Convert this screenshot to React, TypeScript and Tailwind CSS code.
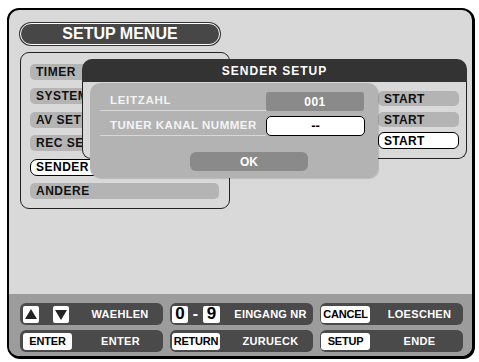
import React from "react";

const font = { fontFamily: '"Liberation Sans", Arial, sans-serif' };

const menuItems = ["TIMER", "SYSTEM", "AV SETUP", "REC SETUP", "SENDER", "ANDERE"];

function Key({ children, w = "w-[49px]" }: { children: React.ReactNode; w?: string }) {
  return (
    <div
      className={`${w} h-[17px] bg-white rounded-[3px] flex items-center justify-center text-black text-[11px] font-bold tracking-[-0.2px]`}
    >
      {children}
    </div>
  );
}

function Tri({ down }: { down?: boolean }) {
  return (
    <div className="w-[16px] h-[17px] bg-white rounded-[2px] flex items-center justify-center">
      <svg width="12" height="11" viewBox="0 0 12 11">
        {down ? <polygon points="0,1 12,1 6,11" fill="#222" /> : <polygon points="6,0 12,10 0,10" fill="#222" />}
      </svg>
    </div>
  );
}

export default function App() {
  return (
    <div className="w-[479px] h-[362px] bg-white overflow-hidden" style={font}>
      <div className="ml-[7px] mt-[8px] w-[467px] h-[350px] rounded-[12px] border-2 border-black shadow-[1px_1px_0_#000] bg-[#d9d9d9] flex flex-col overflow-hidden">
        {/* top area */}
        <div className="relative h-[284px] shrink-0">
          <div className="ml-[11px] mt-[13px] w-[200px] h-[22px] rounded-full bg-[#474747] border-[1.5px] border-white ring-1 ring-[#333] flex items-center justify-center">
            <span className="text-white text-[16px] font-bold">SETUP MENUE</span>
          </div>

          <div className="ml-[11px] mt-[7px] w-[210px] h-[157px] rounded-[9px] border-[1.5px] border-[#222] pt-[11px] pl-[9px] flex flex-col gap-[7.8px]">
            {menuItems.map((m) =>
              m === "SENDER" ? (
                <div
                  key={m}
                  className="w-[189px] h-[17px] -my-[0.5px] rounded-[7px] bg-white border-[1.5px] border-black flex items-center pl-[5px] text-[12px] font-bold tracking-[0.5px] text-black"
                >
                  {m}
                </div>
              ) : (
                <div
                  key={m}
                  className="w-[189px] h-[16px] rounded-[5px] bg-[#b4b4b4] flex items-center pl-[6px] text-[12px] font-bold tracking-[0.5px] text-[#111]"
                >
                  {m}
                </div>
              )
            )}
          </div>

          {/* SENDER SETUP window */}
          <div className="absolute left-[73px] top-[49px] w-[385px] flex flex-col">
            <div className="h-[23px] rounded-t-[10px] bg-[#333] flex items-center justify-center text-white text-[12px] font-bold tracking-[1px]">
              SENDER SETUP
            </div>
            <div className="h-[77px] bg-[#d9d9d9] border-x-[1.5px] border-b-[1.5px] border-[#222] rounded-b-[9px] flex flex-col items-end pr-[7px] pt-[9px] gap-[6px]">
              <div className="w-[81px] h-[15px] rounded-[5px] bg-[#b4b4b4] flex items-center pl-[6px] text-[12px] font-bold tracking-[0.3px] text-[#111]">
                START
              </div>
              <div className="w-[81px] h-[15px] rounded-[5px] bg-[#b4b4b4] flex items-center pl-[6px] text-[12px] font-bold tracking-[0.3px] text-[#111]">
                START
              </div>
              <div className="w-[81px] h-[17px] -mt-[1px] rounded-[6px] bg-white border-[1.5px] border-black flex items-center pl-[5px] text-[12px] font-bold tracking-[0.3px] text-black">
                START
              </div>
            </div>
          </div>

          {/* dialog panel */}
          <div className="absolute left-[81px] top-[73px] w-[288px] h-[95px] rounded-[10px] bg-[#b3b3b3] shadow-[1px_1px_1px_rgba(0,0,0,0.15)] pt-[8px] flex flex-col">
            <div className="flex items-end h-[20px]">
              <div className="ml-[10px] w-[166px] h-[20px] border-b border-[#d8d8d8] flex items-center pl-[10px] text-[#f4f4f4] text-[11.5px] font-bold tracking-[0.7px]">
                LEITZAHL
              </div>
              <div className="w-[98px] h-[19px] rounded-[3px] bg-[#8a8a8a] flex items-center justify-center text-white text-[12px] font-bold tracking-[0.5px]">
                001
              </div>
            </div>
            <div className="flex items-end h-[20px] mt-[5px]">
              <div className="ml-[10px] w-[166px] h-[20px] border-b border-[#d8d8d8] flex items-center pl-[10px] text-[#f4f4f4] text-[11.5px] font-bold tracking-[0.5px] whitespace-nowrap">
                TUNER KANAL NUMMER
              </div>
              <div className="w-[99px] h-[20px] rounded-[5px] bg-white border-[1.5px] border-black flex items-center justify-center text-black text-[13px] font-bold">
                --
              </div>
            </div>
            <div className="ml-[100px] mt-[16px] w-[118px] h-[19px] rounded-[6px] bg-[#8a8a8a] flex items-center justify-center text-white text-[12px] font-bold">
              OK
            </div>
          </div>
        </div>

        {/* bottom bar */}
        <div className="flex-1 bg-[#9c9c9c] pl-[11px] pt-[9px] grid grid-cols-[143px_143px_143px] grid-rows-[22px_22px] gap-x-[7px] gap-y-[5px]">
          <div className="rounded-[6px] bg-[#4a4a4a] flex items-center pl-[3px]">
            <Tri />
            <div className="w-[14px]" />
            <Tri down />
            <div className="flex-1 pl-[8px] text-center text-white text-[11px] font-bold tracking-[0.3px]">WAEHLEN</div>
          </div>
          <div className="rounded-[6px] bg-[#4a4a4a] flex items-center pl-[2px]">
            <div className="w-[16px] h-[17px] bg-white rounded-[2px] flex items-center justify-center text-black text-[17px] font-bold">0</div>
            <div className="w-[15px] text-center text-white text-[16px] font-bold">-</div>
            <div className="w-[17px] h-[17px] bg-white rounded-[2px] flex items-center justify-center text-black text-[17px] font-bold">9</div>
            <div className="flex-1 pl-[8px] text-center text-white text-[11px] font-bold tracking-[0.2px] whitespace-nowrap">EINGANG NR</div>
          </div>
          <div className="rounded-[6px] bg-[#4a4a4a] flex items-center pl-[1px]">
            <Key>CANCEL</Key>
            <div className="flex-1 pl-[6px] text-center text-white text-[11px] font-bold tracking-[0.3px]">LOESCHEN</div>
          </div>
          <div className="rounded-[6px] bg-[#4a4a4a] flex items-center pl-[3px]">
            <Key>ENTER</Key>
            <div className="flex-1 pl-[6px] text-center text-white text-[11px] font-bold tracking-[0.3px]">ENTER</div>
          </div>
          <div className="rounded-[6px] bg-[#4a4a4a] flex items-center pl-[2px]">
            <Key w="w-[48px]">RETURN</Key>
            <div className="flex-1 pl-[8px] text-center text-white text-[11px] font-bold tracking-[0.3px]">ZURUECK</div>
          </div>
          <div className="rounded-[6px] bg-[#4a4a4a] flex items-center pl-[1px]">
            <Key>SETUP</Key>
            <div className="flex-1 pl-[6px] text-center text-white text-[11px] font-bold tracking-[0.3px]">ENDE</div>
          </div>
        </div>
      </div>
    </div>
  );
}
